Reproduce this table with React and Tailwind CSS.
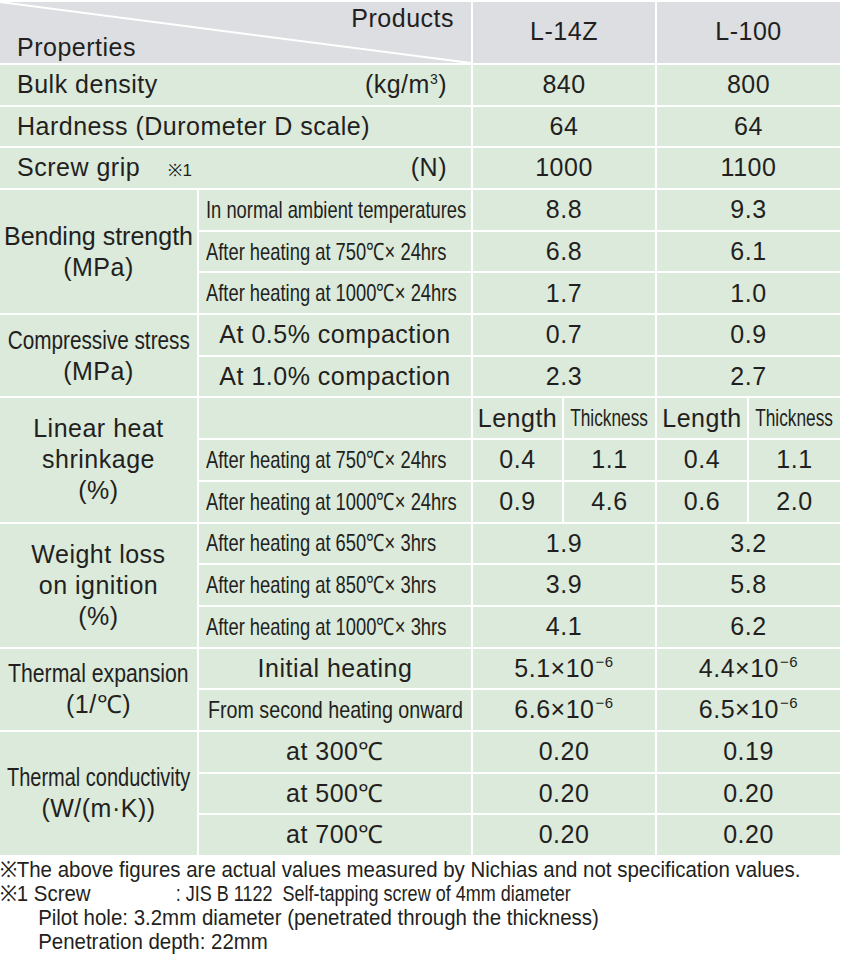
import React from "react";

const cell = "bg-[#dbeadb] flex items-center justify-center min-w-0 min-h-0";

// condensed text: no narrow face is installed, so squeeze Liberation Sans
const Cond = ({ children, size = "text-[24px]", origin = "origin-left", sx = "scale-x-[0.765]" }) => (
    <span className={`inline-block whitespace-nowrap tracking-normal ${size} ${sx} ${origin}`}>{children}</span>
);

const Sub = ({ children }) => (
    <div className={`${cell} !justify-start pl-[7px]`}>
        <Cond>{children}</Cond>
    </div>
);

const SubC = ({ children }) => <div className={cell}>{children}</div>;

const Val = ({ children, span = 2 }) => (
    <div className={`${cell} ${span === 2 ? "col-span-2" : ""}`}>{children}</div>
);

const Group = ({ rows, children }) => (
    <div className={`${cell} flex-col text-center whitespace-nowrap leading-[31px] ${rows === 3 ? "row-span-3" : "row-span-2"}`}>
        {children}
    </div>
);

const Exp = ({ base }) => (
    <span>
        {base}×10<sup className="text-[15px] !-top-[10px] ml-[1px]">−6</sup>
    </span>
);

export default function App() {
    return (
        <div className="w-[859px] h-[960px] bg-white text-[#231f20] font-['Liberation_Sans',Arial,sans-serif] overflow-hidden">
            <div className="grid w-[840px] h-[855px] gap-[2px] pt-[2px] grid-cols-[197px_272px_89px_91px_90px_91px] grid-rows-[61px_repeat(19,minmax(0,1fr))] text-[25px] tracking-[0.5px]">
                {/* header */}
                <div className="col-span-2 relative bg-[#dcdee1]">
                    <svg className="absolute inset-0" width="471" height="61" viewBox="0 0 471 61">
                        <line x1="0" y1="0" x2="471" y2="61" stroke="#ffffff" strokeWidth="2" />
                    </svg>
                    <span className="absolute right-[17px] -top-[2px]">Products</span>
                    <span className="absolute left-[17px] top-[27px]">Properties</span>
                </div>
                <div className="col-span-2 bg-[#dcdee1] flex items-center justify-center pb-[2px]">L-14Z</div>
                <div className="col-span-2 bg-[#dcdee1] flex items-center justify-center pb-[2px]">L-100</div>

                {/* single rows */}
                <div className={`${cell} col-span-2 !justify-between pl-[17px] pr-[24px]`}>
                    <span>Bulk density</span>
                    <span>(kg/m<sup className="text-[14px] !-top-[9px]">3</sup>)</span>
                </div>
                <Val>840</Val>
                <Val>800</Val>

                <div className={`${cell} col-span-2 !justify-start pl-[17px]`}>
                    <span>Hardness (Durometer D scale)</span>
                </div>
                <Val>64</Val>
                <Val>64</Val>

                <div className={`${cell} col-span-2 !justify-between pl-[17px] pr-[24px]`}>
                    <span>
                        Screw grip<span className="text-[17px] ml-[28px]">※1</span>
                    </span>
                    <span>(N)</span>
                </div>
                <Val>1000</Val>
                <Val>1100</Val>

                {/* bending strength */}
                <Group rows={3}>
                    <span className="tracking-normal">Bending strength</span>
                    <span>(MPa)</span>
                </Group>
                <Sub>In normal ambient temperatures</Sub>
                <Val>8.8</Val>
                <Val>9.3</Val>
                <Sub>After heating at 750℃× 24hrs</Sub>
                <Val>6.8</Val>
                <Val>6.1</Val>
                <Sub>After heating at 1000℃× 24hrs</Sub>
                <Val>1.7</Val>
                <Val>1.0</Val>

                {/* compressive stress */}
                <Group rows={2}>
                    <Cond size="text-[25px]" origin="origin-center" sx="scale-x-[0.83]">Compressive stress</Cond>
                    <span>(MPa)</span>
                </Group>
                <SubC>At 0.5% compaction</SubC>
                <Val>0.7</Val>
                <Val>0.9</Val>
                <SubC>At 1.0% compaction</SubC>
                <Val>2.3</Val>
                <Val>2.7</Val>

                {/* linear heat shrinkage */}
                <Group rows={3}>
                    <span>Linear heat</span>
                    <span>shrinkage</span>
                    <span>(%)</span>
                </Group>
                <div className={cell}></div>
                <Val span={1}>Length</Val>
                <Val span={1}>
                    <Cond origin="origin-center" sx="scale-x-[0.72]">Thickness</Cond>
                </Val>
                <Val span={1}>Length</Val>
                <Val span={1}>
                    <Cond origin="origin-center" sx="scale-x-[0.72]">Thickness</Cond>
                </Val>
                <Sub>After heating at 750℃× 24hrs</Sub>
                <Val span={1}>0.4</Val>
                <Val span={1}>1.1</Val>
                <Val span={1}>0.4</Val>
                <Val span={1}>1.1</Val>
                <Sub>After heating at 1000℃× 24hrs</Sub>
                <Val span={1}>0.9</Val>
                <Val span={1}>4.6</Val>
                <Val span={1}>0.6</Val>
                <Val span={1}>2.0</Val>

                {/* weight loss on ignition */}
                <Group rows={3}>
                    <span>Weight loss</span>
                    <span>on ignition</span>
                    <span>(%)</span>
                </Group>
                <Sub>After heating at 650℃× 3hrs</Sub>
                <Val>1.9</Val>
                <Val>3.2</Val>
                <Sub>After heating at 850℃× 3hrs</Sub>
                <Val>3.9</Val>
                <Val>5.8</Val>
                <Sub>After heating at 1000℃× 3hrs</Sub>
                <Val>4.1</Val>
                <Val>6.2</Val>

                {/* thermal expansion */}
                <Group rows={2}>
                    <Cond size="text-[25px]" origin="origin-center" sx="scale-x-[0.85]">Thermal expansion</Cond>
                    <span>(1/℃)</span>
                </Group>
                <SubC>Initial heating</SubC>
                <Val><Exp base="5.1" /></Val>
                <Val><Exp base="4.4" /></Val>
                <SubC>
                    <Cond origin="origin-center" sx="scale-x-[0.82]">From second heating onward</Cond>
                </SubC>
                <Val><Exp base="6.6" /></Val>
                <Val><Exp base="6.5" /></Val>

                {/* thermal conductivity */}
                <Group rows={3}>
                    <Cond size="text-[25px]" origin="origin-center" sx="scale-x-[0.8]">Thermal conductivity</Cond>
                    <span>(W/(m·K))</span>
                </Group>
                <SubC>at 300℃</SubC>
                <Val>0.20</Val>
                <Val>0.19</Val>
                <SubC>at 500℃</SubC>
                <Val>0.20</Val>
                <Val>0.20</Val>
                <SubC>at 700℃</SubC>
                <Val>0.20</Val>
                <Val>0.20</Val>
            </div>

            <div className="text-[22px] leading-[24px] pt-[3px] whitespace-pre origin-top-left scale-x-[0.93]">
                <p>※The above figures are actual values measured by Nichias and not specification values.</p>
                <p>
                    <span className="inline-block w-[189px]">※1 Screw</span>
                    <span className="inline-block origin-left scale-x-[0.88]">: JIS B 1122  Self-tapping screw of 4mm diameter</span>
                </p>
                <p className="pl-[41px]">Pilot hole: 3.2mm diameter (penetrated through the thickness)</p>
                <p className="pl-[41px]">Penetration depth: 22mm</p>
            </div>
        </div>
    );
}
